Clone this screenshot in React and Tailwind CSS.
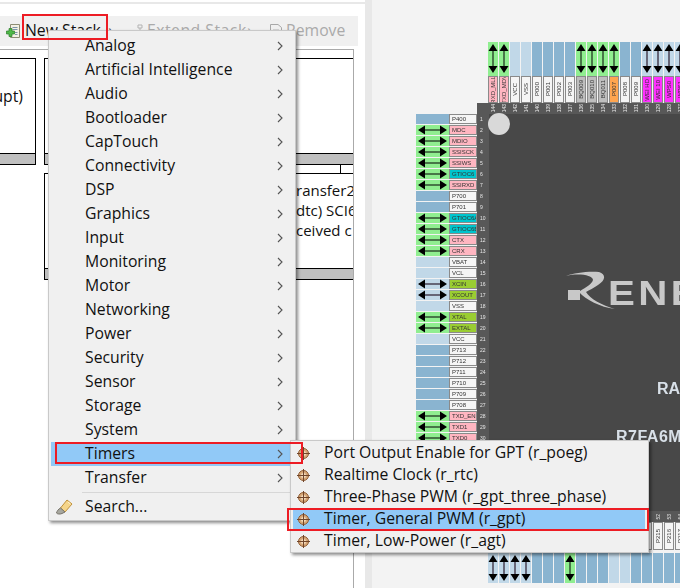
const menuItems = [
  "Analog", "Artificial Intelligence", "Audio", "Bootloader", "CapTouch", "Connectivity",
  "DSP", "Graphics", "Input", "Monitoring", "Motor", "Networking", "Power", "Security",
  "Sensor", "Storage", "System", "Timers", "Transfer",
];

const timerItems = [
  "Port Output Enable for GPT (r_poeg)",
  "Realtime Clock (r_rtc)",
  "Three-Phase PWM (r_gpt_three_phase)",
  "Timer, General PWM (r_gpt)",
  "Timer, Low-Power (r_agt)",
];

const cellBg = { g: "bg-[#90ee90]", b: "bg-[#8ab4d0]", l: "bg-[#c1d8e8]", a: "bg-[#c1d8e8]" };
const labelBg = {
  w: "bg-[#f5f5f5]", p: "bg-[#ffb6c1]", t: "bg-[#00c5cd]", o: "bg-[#9acd32]",
  y: "bg-[#bebebe]", r: "bg-[#ffa54f]", m: "bg-[#ff30ff]",
};

const leftPins = [
  ["b", "w", "P400"], ["g", "p", "MDC"], ["g", "p", "MDIO"], ["g", "p", "SSISCK"], ["g", "p", "SSIWS"],
  ["g", "t", "GTIOC6"], ["g", "p", "SSIRXD"], ["b", "w", "P700"], ["b", "w", "P701"], ["g", "t", "GTIOC6A"],
  ["g", "t", "GTIOC6B"], ["g", "p", "CTX"], ["g", "p", "CRX"], ["l", "w", "VBAT"], ["l", "w", "VCL"],
  ["a", "o", "XCIN"], ["a", "o", "XCOUT"], ["l", "w", "VSS"], ["g", "o", "XTAL"], ["g", "o", "EXTAL"],
  ["l", "w", "VCC"], ["b", "w", "P713"], ["b", "w", "P712"], ["b", "w", "P711"], ["b", "w", "P710"],
  ["b", "w", "P709"], ["b", "w", "P708"], ["g", "p", "TXD_EN"], ["g", "p", "TXD1"], ["g", "p", "TXD0"],
];

const topPins = [
  ["g", "p", "RXD_MLL"], ["g", "p", "TXD_MDV"], ["l", "w", "VCC"], ["l", "w", "VSS"], ["b", "w", "P000"],
  ["b", "w", "P001"], ["b", "w", "P002"], ["b", "w", "P003"], ["g", "y", "BQ009"], ["g", "y", "BQ010"],
  ["g", "y", "BQ011"], ["g", "r", "P007"], ["b", "w", "P008"], ["b", "w", "P009"], ["a", "m", "WEI HD"],
  ["a", "m", "WEI 10"], ["a", "m", "WPS0"], ["a", "m", "WPS1"],
];

const bottomPins = ["a", "a", "a", "a", "b", "b", "b", "g", "b", "b", "b", "l", "l", "b", "b", "b", "b", "b"];

function ArrowH({ soft }) {
  return (
    <svg width="33" height="10" viewBox="0 0 33 10" className="block">
      <path d="M8 5H26" stroke={soft ? "#667" : "#000"} strokeWidth={soft ? 2 : 1} />
      <path d="M2 5L9 0.5V9.5ZM31 5L24 0.5V9.5Z" fill="#000" />
    </svg>
  );
}

function ArrowV({ soft, height = 33 }) {
  return (
    <svg width="10" height={height} viewBox={`0 0 10 ${height}`} className="block">
      <path d={`M5 8V${height - 8}`} stroke={soft ? "#667" : "#000"} strokeWidth={soft ? 2 : 1} />
      <path d={`M5 2L0.5 9H9.5ZM5 ${height - 2}L0.5 ${height - 9}H9.5Z`} fill="#000" />
    </svg>
  );
}

function PinNumber({ n }) {
  return (
    <div className="w-[10px] mr-px shrink-0 h-[11px] flex items-center justify-center">
      <span className="text-[5px] leading-[8px] text-[#e8e8e8] rotate-180 [writing-mode:vertical-rl]">{n}</span>
    </div>
  );
}

function LeftPin({ pin, n }) {
  const [kind, label, name] = pin;
  return (
    <div className="flex h-[10px] mb-px">
      <div className={`w-[33px] h-[10px] ${cellBg[kind]}`}>
        {(kind === "g" || kind === "a") && <ArrowH soft={kind === "a"} />}
      </div>
      <div className={`w-[28px] h-[10px] pl-[2px] border border-[#8a8a8a] text-[6px] leading-[8px] text-[#333] overflow-hidden ${labelBg[label]}`}>
        {name}
      </div>
      <div className="w-[12px] pl-[3px] text-[5px] leading-[10px] text-[#e8e8e8]">{n}</div>
    </div>
  );
}

function TopPin({ pin }) {
  const [kind, label, name] = pin;
  return (
    <div className="w-[10px] mr-px shrink-0">
      <div className={`h-[34px] ${cellBg[kind]}`}>
        {(kind === "g" || kind === "a") && <ArrowV soft={kind === "a"} />}
      </div>
      <div className={`h-[27px] flex items-center justify-center border border-[#8a8a8a] overflow-hidden ${labelBg[label]}`}>
        <span className="text-[6px] leading-[8px] text-[#333] whitespace-nowrap rotate-180 [writing-mode:vertical-rl]">{name}</span>
      </div>
    </div>
  );
}

function Chip() {
  return (
    <div className="blur-[0.3px] font-['Liberation_Sans',sans-serif] w-[264px]">
      <div className="pl-[72px] flex overflow-hidden">
        {topPins.map((p, i) => <TopPin key={i} pin={p} />)}
      </div>
      <div className="ml-[61px] pl-[11px] flex overflow-hidden bg-[#585858]">
        {topPins.map((p, i) => <PinNumber key={i} n={144 - i} />)}
      </div>
      <div className="flex">
        <div className="shrink-0 w-[73px] relative z-10">
          {leftPins.map((p, i) => <LeftPin key={i} pin={p} n={i + 1} />)}
        </div>
        <div className="w-[203px] shrink-0 h-[397px] bg-[#484848] -ml-[12px] border-l-[12px] border-[#585858]">
          <div className="-ml-[1px] -mt-[1px] w-[22px] h-[22px] rounded-full bg-[#d9d9d9]" />
          <div className="flex items-start pl-[79px] pt-[141px] h-[166px] text-[#c8c8c8] font-bold">
            <div className="w-[12px] h-[10px] mt-[14px] bg-[#c8c8c8] shrink-0" />
            <svg width="50" height="40" viewBox="0 0 50 40" className="shrink-0 -ml-[12px] -mt-[4px] overflow-visible">
              <path d="M-2 4C6 1 20 -1 31 0C38 2 38 8 30 13C26 16 21 18 18 20C22 27 34 33 47 37C32 35 18 28 11 20C14 17 24 13 25 8C25 3 10 1 -2 4Z" fill="#c8c8c8" />
            </svg>
            <span className="text-[35px] leading-[40px] whitespace-nowrap tracking-[3px] -ml-[10px] -mt-[3px] scale-x-[1.15] origin-left">ENE</span>
          </div>
          <div className="pl-[168px] pt-[79px] text-[16px] leading-[18px] font-bold text-[#d8e0e8] whitespace-nowrap">RA</div>
          <div className="pl-[127px] pt-[30px] text-[16px] leading-[18px] font-bold tracking-[0.5px] text-[#d8e0e8] whitespace-nowrap">R7FA6M</div>
        </div>
      </div>
      <div className="ml-[61px] pl-[11px] flex overflow-hidden bg-[#585858]">
        {bottomPins.map((k, i) => <PinNumber key={i} n={37 + i} />)}
      </div>
      <div className="pl-[72px] flex overflow-hidden">
        {bottomPins.map((k, i) => (
          <div key={i} className="w-[10px] mr-px shrink-0">
            <div className="h-[28px] mb-[3px] flex items-center justify-center border border-[#8a8a8a] overflow-hidden bg-[#f5f5f5]">
              <span className="text-[6px] leading-[8px] text-[#333] whitespace-nowrap rotate-180 [writing-mode:vertical-rl]">P{200 + i}</span>
            </div>
            <div className={`h-[30px] ${cellBg[k]}`}>
              {(k === "g" || k === "a") && <ArrowV soft={k === "a"} height={30} />}
            </div>
          </div>
        ))}
      </div>
    </div>
  );
}

function StackBox({ className = "", children }) {
  return (
    <div className={`h-[107px] border border-black flex flex-col ${className}`}>
      <div className="flex-1 overflow-hidden">{children}</div>
      <div className="h-[11px] bg-[#c0c0c0] border-t border-black" />
    </div>
  );
}

function PlusDocIcon() {
  return (
    <svg width="16" height="16" viewBox="0 0 16 16" className="shrink-0">
      <path d="M4.5 1.5H13.5V14.5H4.5Z" fill="#f4f1e4" stroke="#8c8c74" />
      <path d="M6.5 4.5H11.5M6.5 6.5H11.5M9 9.5H11.5M9 11.5H11.5" stroke="#7a93a8" />
      <path d="M3 5.5H6V8H8.5V11H6V13.5H3V11H0.5V8H3Z" fill="#4fb848" stroke="#2d7d2b" strokeWidth="0.7" />
    </svg>
  );
}

function ExtendIcon() {
  return (
    <svg width="14" height="14" viewBox="0 0 14 14" className="shrink-0">
      <path d="M5 1H9V4H5ZM7 4V7M2 7H12M3 7V10M11 7V10M1.5 10H5V13H1.5ZM9 10H12.5V13H9Z" fill="none" stroke="#b3b3b3" />
    </svg>
  );
}

function RemoveIcon() {
  return (
    <svg width="16" height="16" viewBox="0 0 16 16" className="shrink-0">
      <path d="M2.5 1.5H10L13.5 4.5V14.5H2.5Z" fill="none" stroke="#a8a8a8" />
      <path d="M5 7H11M5 10H9" stroke="#b8b8b8" />
    </svg>
  );
}

function SearchIcon() {
  return (
    <svg width="18" height="16" viewBox="0 0 18 16" className="shrink-0">
      <path d="M11 1L16 5L9 13L4.5 9Z" fill="#f5d58a" stroke="#c0913a" />
      <path d="M4.5 9L9 13L6 14.5C4 15.5 1 15 0.5 14C1 12 2.5 10 4.5 9Z" fill="#a8a8a0" stroke="#77736a" />
      <path d="M12 3L14.5 5" stroke="#fff6d8" />
    </svg>
  );
}

function ComponentIcon() {
  return (
    <svg width="13" height="13" viewBox="0 0 13 13" className="shrink-0">
      <circle cx="6.5" cy="6.5" r="5" fill="#d8a878" stroke="#8f5b32" />
      <circle cx="6.5" cy="6.5" r="2.5" fill="#f3dcbf" />
      <path d="M6.5 0V13M0 6.5H13" stroke="#70452a" />
    </svg>
  );
}

function Chevron() {
  return (
    <svg width="6" height="10" viewBox="0 0 6 10" className="shrink-0">
      <path d="M1 1L5 5L1 9" fill="none" stroke="#555" strokeWidth="1.1" />
    </svg>
  );
}

function StackMenu() {
  return (
    <div className="absolute left-[48px] top-[30px] w-[248px] h-[491px] bg-[#f0f0f0] border border-[#c9c9c9] shadow-[2px_2px_3px_rgba(0,0,0,0.45)] pt-[3px] pl-[2px] text-[#111]">
      {menuItems.map((item) => (
        <div key={item} className={`h-[24px] flex items-center pl-[34px] pr-[12px] justify-between ${item === "Timers" ? "bg-[#91c9f7]" : ""}`}>
          <span>{item}</span>
          <Chevron />
        </div>
      ))}
      <div className="ml-[31px] mt-[2px] h-px bg-[#d7d7d7]" />
      <div className="h-[24px] mt-[2px] flex items-center pl-[5px] gap-[11px]">
        <SearchIcon />
        <span>Search...</span>
      </div>
    </div>
  );
}

function TimerMenu() {
  return (
    <div className="absolute left-[290px] top-[440px] w-[359px] h-[113px] bg-[#f0f0f0] border border-[#c9c9c9] shadow-[2px_2px_3px_rgba(0,0,0,0.45)] pt-px pl-[2px] pr-[3px] text-[#111]">
      {timerItems.map((item, i) => (
        <div key={item} className={`h-[22px] flex items-center pl-[4px] gap-[14px] ${i === 3 ? "bg-[#91c9f7]" : ""}`}>
          <ComponentIcon />
          <span>{item}</span>
        </div>
      ))}
    </div>
  );
}

export default function App() {
  return (
    <div className="relative w-[680px] h-[588px] overflow-hidden bg-white flex text-[15.75px] font-['Open_Sans',sans-serif]">
      {/* Stacks pane */}
      <div className="w-[372px] shrink-0 pt-[2px] border-r-[7px] border-[#e8e8e8]">
        <div className="h-[2px] bg-[#e8e8e8]" />
        <div className="mt-[12px] w-[358px] h-[30px] bg-[#f0f0f0] flex items-center pl-[6px]">
          <div className="w-[127px] flex items-center gap-[3px] pr-[20px]">
            <PlusDocIcon />
            <span className="text-[#111] whitespace-nowrap">New Stack</span>
            <span className="text-[#555] ml-auto">›</span>
          </div>
          <div className="w-[135px] flex items-center pr-[16px]">
            <ExtendIcon />
            <span className="text-[#aaa] whitespace-nowrap tracking-[0.5px]">Extend Stack</span>
            <span className="text-[#aaa] ml-auto">›</span>
          </div>
          <div className="flex items-center gap-[2px]">
            <RemoveIcon />
            <span className="text-[#aaa]">Remove</span>
          </div>
        </div>
        <div className="mt-[3px] w-[354px] h-[539px] border-t border-r border-[#aaa] pt-[8px] overflow-hidden">
          <div className="flex gap-[8px]">
            <StackBox className="w-[36px] border-l-0 shrink-0">
              <div className="flex justify-end pr-[12px] pt-[27px] leading-[20px] whitespace-nowrap text-[#111]">upt)</div>
            </StackBox>
            <StackBox className="flex-1 border-r-0" />
          </div>
          <div className="h-[8px] flex justify-end pr-[12px]">
            <div className="w-px bg-black" />
          </div>
          <StackBox className="ml-[44px] border-r-0">
            <div className="pl-[251px] pt-[6px] text-[15px] leading-[20px] whitespace-nowrap text-[#111]">
              <div>ransfer2</div>
              <div>dtc) SCI6</div>
              <div>ceived c</div>
            </div>
          </StackBox>
        </div>
      </div>

      {/* Pin configuration pane */}
      <div className="flex-1 bg-[#f3f3f3] pl-[44px] pt-[42px] overflow-hidden">
        <Chip />
      </div>

      <StackMenu />
      <TimerMenu />

      {/* Red annotation boxes */}
      <div className="absolute left-[22px] top-[14px] w-[86px] h-[26px] border-2 border-[#ed1c24]" />
      <div className="absolute left-[55px] top-[442px] w-[248px] h-[22px] border-2 border-[#ed1c24]" />
      <div className="absolute left-[287px] top-[508px] w-[362px] h-[23px] border-2 border-[#ed1c24]" />
    </div>
  );
}
